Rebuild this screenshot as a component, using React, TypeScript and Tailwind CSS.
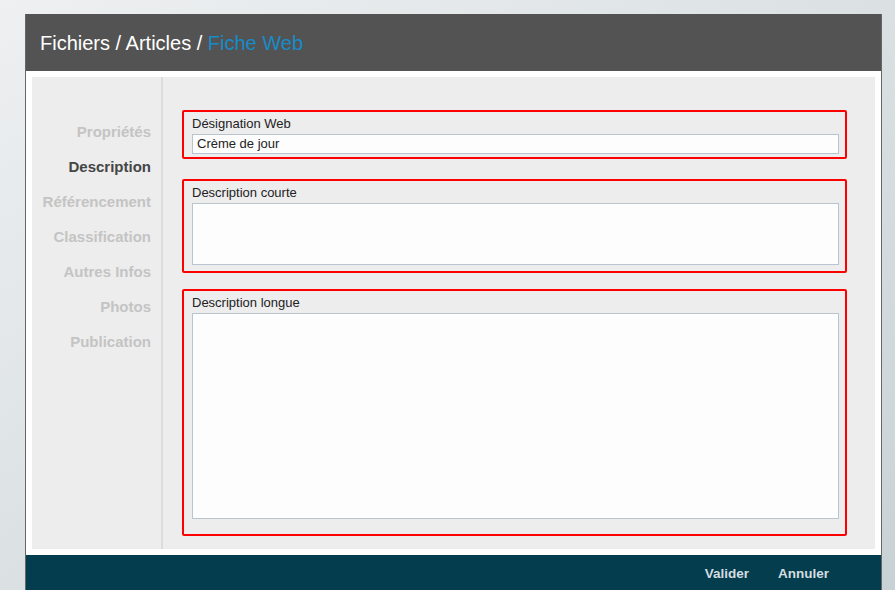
import React from 'react'

const navItems = [
  'Propriétés',
  'Description',
  'Référencement',
  'Classification',
  'Autres Infos',
  'Photos',
  'Publication',
]

const Field: React.FC<{ label: string; className?: string; children: React.ReactNode }> = ({ label, className, children }) => (
  <div className={`border-2 border-[#ff0000] rounded-[2px] pt-[5px] pl-[8px] pr-[6px] ${className ?? ''}`}>
    <div className="text-[13px] leading-[14px] text-[#222] mb-[3px]">{label}</div>
    {children}
  </div>
)

export default function App() {
  return (
    <div
      className="h-[590px] w-full overflow-hidden bg-gradient-to-br from-[#eef0f1] to-[#c8d2d5] pt-[14px] pl-[25px]"
      style={{ fontFamily: '"Liberation Sans", Arial, sans-serif' }}
    >
      <div className="w-[857px] border border-t-0 border-b-0 border-[#666] bg-white">
        {/* Header */}
        <div className="h-[57px] bg-[#535353] flex items-center px-[14px] text-[20px] text-white">
          Fichiers / Articles /&nbsp;<span className="text-[#178bc9]">Fiche Web</span>
        </div>

        {/* Body */}
        <div className="p-[6px]">
          <div className="h-[472px] bg-[#ededed] flex">
            <div className="w-[131px] border-r-2 border-[#dcdcdc] pt-[37px] pr-[10px] flex flex-col items-end">
              {navItems.map((item) => (
                <div
                  key={item}
                  className={`h-[35px] leading-[35px] text-[15px] font-bold ${item === 'Description' ? 'text-[#454545]' : 'text-[#c4c4c4]'}`}
                >
                  {item}
                </div>
              ))}
            </div>

            <div className="flex-1 pt-[33px] pl-[19px] pr-[28px] flex flex-col">
              <Field label="Désignation Web" className="pb-[3px]">
                <div className="h-[20px] border border-[#b8c5ce] bg-[#fdfdfd] px-[4px] text-[13px] leading-[18px] text-[#222]">
                  Crème de jour
                </div>
              </Field>

              <Field label="Description courte" className="mt-[20px] pb-[6px]">
                <div className="h-[62px] border border-[#b8c5ce] bg-[#fdfdfd]" />
              </Field>

              <Field label="Description longue" className="mt-[16px] pb-[15px]">
                <div className="h-[206px] border border-[#b8c5ce] bg-[#fdfdfd]" />
              </Field>
            </div>
          </div>
        </div>

        {/* Footer */}
        <div className="h-[38px] bg-[#033d4e] flex items-center justify-end pr-[52px] gap-[29px] text-[13.5px] font-bold text-[#d5dde0]">
          <span>Valider</span>
          <span>Annuler</span>
        </div>
      </div>
    </div>
  )
}
